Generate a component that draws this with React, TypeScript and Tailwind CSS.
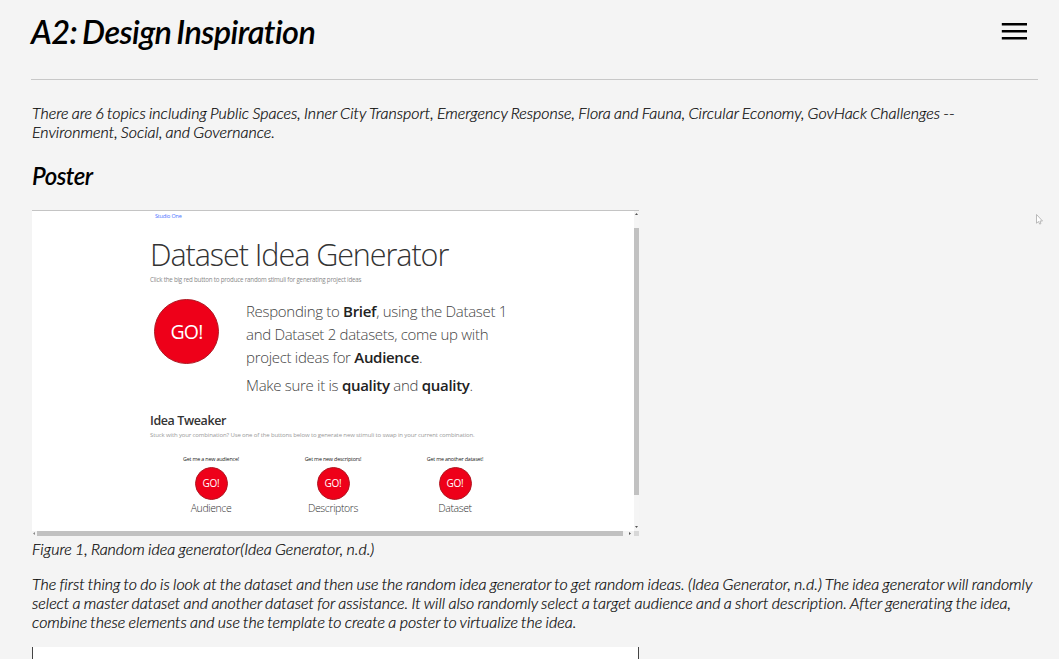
type TweakProps = { prompt: string; label: string };

function Tweak({ prompt, label }: TweakProps) {
  return (
    <div className="flex w-[122px] flex-col items-center whitespace-nowrap">
      <p className="h-[8px] text-[5.4px] font-normal leading-[8px] tracking-[-0.2px] text-[#222]">{prompt}</p>
      <button className="mt-[4px] flex h-[33px] w-[33px] items-center justify-center rounded-full border border-[#b01722] bg-[#ee0019] pb-[2px] text-[10px] font-normal leading-none tracking-[-0.3px] text-white">
        GO!
      </button>
      <p className="mt-[1px] text-[10.5px] font-light leading-[15px] tracking-[-0.4px] text-[#333]">{label}</p>
    </div>
  );
}

function IdeaGenerator() {
  return (
    <figure className="mt-[20px] flex h-[327px] w-[607px] flex-col border-t border-[#c4c4c4] font-['Open_Sans','Noto_Sans',sans-serif] not-italic">
      <div className="flex h-[320px] bg-white">
        <div className="w-[602px] whitespace-nowrap pl-[118px]">
          <p className="ml-[5px] h-[10px] text-[5.5px] font-normal leading-[10px] tracking-[-0.2px] text-[#4b72ff]">Studio One</p>
          <h3 className="mt-[13px] h-[40px] text-[30.5px] font-light leading-[40px] tracking-[-1.05px] text-[#333]">
            Dataset Idea Generator
          </h3>
          <p className="mt-[1px] h-[9px] text-[6.2px] font-normal leading-[9px] tracking-[-0.2px] text-[#888]">
            Click the big red button to produce random stimuli for generating project ideas
          </p>
          <div className="mt-[14px] flex h-[109px]">
            <button className="ml-[4px] mt-px flex h-[65px] w-[65px] items-center justify-center rounded-full border-[1.5px] border-[#ae1a24] bg-[#ee0019] text-[19.5px] font-normal leading-none tracking-[-0.8px] text-white">
              GO!
            </button>
            <div className="ml-[27px] mt-[2px] text-[15px] font-light leading-[23px] tracking-[-0.3px] text-[#444]">
              <p>
                Responding to <b className="font-semibold text-[#222]">Brief</b>, using the Dataset 1
              </p>
              <p>and Dataset 2 datasets, come up with</p>
              <p>
                project ideas for <b className="font-semibold text-[#222]">Audience</b>.
              </p>
              <p className="mt-[5px]">
                Make sure it is <b className="font-semibold text-[#222]">quality</b> and{" "}
                <b className="font-semibold text-[#222]">quality</b>.
              </p>
            </div>
          </div>
          <h4 className="mt-[5px] h-[18px] text-[12.5px] font-semibold leading-[18px] tracking-[-0.4px] text-[#333]">
            Idea Tweaker
          </h4>
          <p className="mt-[1px] h-[8px] text-[6px] font-normal leading-[8px] tracking-[-0.12px] text-[#999]">
            Stuck with your combination? Use one of the buttons below to generate new stimuli to swap in your current
            combination.
          </p>
          <div className="mt-[16px] flex">
            <Tweak prompt="Get me a new audience!" label="Audience" />
            <Tweak prompt="Get me new descriptors!" label="Descriptors" />
            <Tweak prompt="Get me another dataset!" label="Dataset" />
          </div>
        </div>
        <div className="flex w-[5px] flex-col items-center bg-[#f5f5f5] pt-[2px]">
          <svg width="3" height="2" viewBox="0 0 3 2">
            <path d="M0 2 1.5 0 3 2Z" fill="#555" />
          </svg>
          <div className="mt-[13px] h-[267px] w-[5px] bg-[#c1c1c1]" />
          <svg className="mt-[31px]" width="3" height="2" viewBox="0 0 3 2">
            <path d="M0 0h3L1.5 2Z" fill="#555" />
          </svg>
        </div>
      </div>
      <div className="flex h-[5px] items-center justify-between pl-[1px]">
        <svg width="2" height="3" viewBox="0 0 2 3">
          <path d="M2 0v3L0 1.5Z" fill="#888" />
        </svg>
        <div className="ml-[2px] h-[5px] w-[586px] bg-[#c1c1c1]" />
        <svg className="ml-[6px]" width="2" height="3" viewBox="0 0 2 3">
          <path d="M0 0v3l2-1.5Z" fill="#555" />
        </svg>
        <div className="ml-[3px] h-[5px] w-[5px] bg-[#d8d8d8]" />
      </div>
    </figure>
  );
}

export default function App() {
  return (
    <main className="relative h-[659px] overflow-hidden bg-[#f4f4f4] pl-[31px] pr-[21px] font-['Lato',sans-serif] italic text-[#080808] [font-variant-ligatures:none]">
      <header className="flex h-[80px] items-start justify-between border-b border-[#c8c8c8]">
        <h1 className="mt-[12px] whitespace-nowrap text-[32.5px] font-semibold leading-[40px] tracking-[-0.6px] [word-spacing:-1.8px] text-black">
          A2: Design Inspiration
        </h1>
        <button aria-label="Menu" className="mr-[11px] mt-[22px]">
          <svg width="26" height="18" viewBox="0 0 26 18">
            <path d="M.8 2.3h25.2M.8 9.3h25.2M.8 16.3h25.2" stroke="#000" strokeWidth="2.6" />
          </svg>
        </button>
      </header>
      <div className="whitespace-nowrap pl-[1px] text-[16px] font-light leading-[19px] [word-spacing:-0.75px]">
        <p className="mt-[23px] [-webkit-text-stroke:0.2px]">
          There are 6 topics including Public Spaces, Inner City Transport, Emergency Response, Flora and Fauna,
          Circular Economy, GovHack Challenges --
          <br />
          Environment, Social, and Governance.
        </p>
        <h2 className="mt-[20px] text-[24px] font-semibold leading-[29px] tracking-[-0.5px] text-black">Poster</h2>
        <div className="[word-spacing:0]">
          <IdeaGenerator />
        </div>
        <p className="mt-[2px] [-webkit-text-stroke:0.2px]">Figure 1, Random idea generator(Idea Generator, n.d.)</p>
        <p className="mt-[16px] [-webkit-text-stroke:0.2px]">
          The first thing to do is look at the dataset and then use the random idea generator to get random ideas.
          (Idea Generator, n.d.) The idea generator will randomly
          <br />
          select a master dataset and another dataset for assistance. It will also randomly select a target audience
          and a short description. After generating the idea,
          <br />
          combine these elements and use the template to create a poster to virtualize the idea.
        </p>
        <div className="mt-[16px] h-[40px] w-[607px] border-x border-[#444] bg-white" />
      </div>
      <svg className="absolute left-[1036px] top-[214px]" width="7" height="11" viewBox="0 0 7 11">
        <path d="M.5.5v8.7l2-1.7 1.2 2.6 1.3-.6-1.1-2.5h2.6Z" fill="#fff" stroke="#aaa" strokeWidth=".8" />
      </svg>
    </main>
  );
}
